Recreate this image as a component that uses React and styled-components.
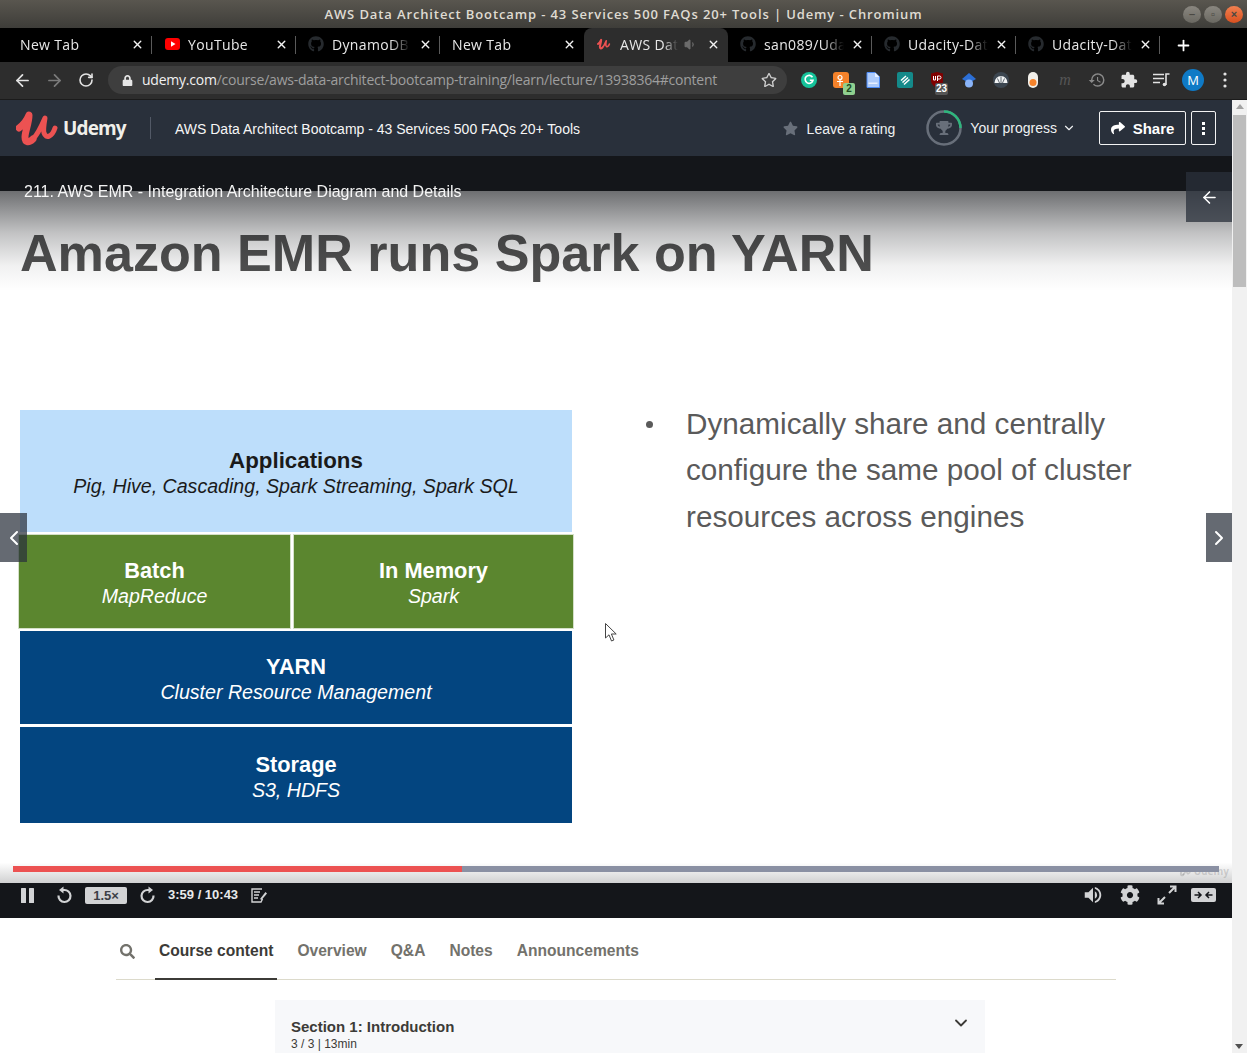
import React from "react";
import styled, { createGlobalStyle } from "styled-components";
import { FaGithub, FaLock, FaShare, FaStar, FaSearch, FaCog, FaTrophy, FaRegStar } from "react-icons/fa";
import { MdExtension, MdVolumeUp, MdHistory } from "react-icons/md";
import { ArrowLeft, ArrowRight, RotateCw, ChevronDown, ChevronLeft, ChevronRight, X, Plus, Volume1 } from "lucide-react";

const Global = createGlobalStyle`
  html, body { margin: 0; padding: 0; background: #fff; }
  body { font-family: "Liberation Sans", Arial, sans-serif; overflow: hidden; }
  * { box-sizing: border-box; }
`;

const Page = styled.div`width: 1247px; height: 1053px; overflow: hidden; display: flex; flex-direction: column;`;

const TitleBar = styled.div`
  height: 28px; flex: none; position: relative; display: flex; align-items: center; justify-content: center;
  background: linear-gradient(#59564f, #3e3d39);
  color: #dfdbd2; font: 600 13px/28px "Open Sans", sans-serif; letter-spacing: 0.88px;
`;
const WindowButtons = styled.div`position: absolute; right: 4px; top: 6px; display: flex; gap: 3px;`;
const WindowButton = styled.span`
  width: 18px; height: 17px; border-radius: 50%; display: flex; align-items: center; justify-content: center;
  background: ${p => (p.$close ? "linear-gradient(#f08050,#d9501f)" : "linear-gradient(#8a8780,#6a6861)")};
  color: #4a4843; font: 700 11px/1 "Liberation Sans", sans-serif; letter-spacing: 0;
`;

const TabStrip = styled.div`height: 34px; flex: none; background: #000; display: flex; padding-left: 8px; align-items: stretch;`;
const Tab = styled.div`
  width: 144px; display: flex; align-items: center; padding: 0 0 2px 12px; position: relative; color: #e8e8e8;
  font: 400 14px "Open Sans", sans-serif; letter-spacing: 0.35px;
  background: ${p => (p.$active ? "#2d2d2d" : "transparent")};
  border-radius: ${p => (p.$active ? "8px 8px 0 0" : "0")};
  &::after {
    content: ""; position: absolute; right: 0; top: 8px; bottom: 8px; width: 1px;
    background: ${p => (p.$sep ? "#5a5a5a" : "transparent")};
  }
`;
const TabIcon = styled.span`width: 16px; height: 16px; margin-right: 8px; flex: none; display: flex; align-items: center; justify-content: center; color: #262a2e;`;
const TabName = styled.span`
  width: ${p => p.$w}px; flex: none; white-space: nowrap; overflow: hidden;
  -webkit-mask-image: linear-gradient(90deg, #000 75%, transparent);
`;
const TabClose = styled.span`position: absolute; left: 123px; top: 10px; width: 14px; height: 14px; color: #f2f2f2; display: flex;`;
const Speaker = styled.span`position: absolute; left: 100px; top: 10px; color: #6c6c6c; display: flex;`;
const NewTab = styled.span`width: 46px; display: flex; align-items: center; justify-content: center; color: #fff;`;

const Toolbar = styled.div`height: 38px; flex: none; background: #2d2d2d; border-bottom: 1px solid #1b1b1b; display: flex; align-items: center; padding-left: 6px; padding-bottom: 1px;`;
const NavButton = styled.span`width: 32px; height: 32px; flex: none; display: flex; align-items: center; justify-content: center; color: ${p => p.$dim ? "#7b7b7b" : "#e3e3e3"};`;
const Omnibox = styled.div`
  width: 679px; height: 28px; margin: 0 6px 0 6px; border-radius: 14px; background: #3e3e3e; flex: none;
  display: flex; align-items: center; padding: 0 0 2px 14px; color: #9e9e9e; font: 400 14px "Open Sans", sans-serif; letter-spacing: -0.23px;
`;
const LockWrap = styled.span`width: 20px; flex: none; display: flex; color: #e6e6e6; margin-top: 2px;`;
const Url = styled.span`flex: 1; white-space: nowrap; b { font-weight: 400; color: #f1f1f1; }`;
const BookmarkStar = styled.span`width: 36px; display: flex; justify-content: center; color: #cfcfcf; margin-top: 2px;`;
const ExtSlot = styled.span`width: 32px; height: 32px; flex: none; position: relative; display: flex; align-items: center; justify-content: center;`;
const ExtBadge = styled.span`
  position: absolute; left: ${p => p.$l}px; top: 19px; height: 12px; min-width: 12px; padding: 0 1px; border-radius: 2px;
  background: ${p => p.$bg}; color: ${p => p.$fg}; font: 700 10px/12px "Liberation Sans", sans-serif; text-align: center;
`;
const Avatar = styled.span`width: 22px; height: 22px; border-radius: 50%; background: #0f7ac6; color: #fff; font: 400 13px/22px "Open Sans", sans-serif; text-align: center;`;

const Body = styled.div`flex: 1; min-height: 0; display: flex;`;
const Main = styled.div`width: 1232px; flex: none; display: flex; flex-direction: column; overflow: hidden;`;
const Scrollbar = styled.div`width: 15px; flex: none; background: #f1f1f1; display: flex; flex-direction: column; align-items: center; padding: 4px 1px 0; position: relative;`;
const ScrollUp = styled.span`width: 0; height: 0; border: 4px solid transparent; border-top: 0; border-bottom: 5px solid #a3a3a3; flex: none;`;
const ScrollThumb = styled.span`width: 13px; height: 172px; margin-top: 6px; background: #bdbdbd; flex: none;`;
const ScrollDown = styled.span`position: absolute; bottom: 4px; left: 3px; width: 0; height: 0; border: 4px solid transparent; border-bottom: 0; border-top: 5px solid #505050;`;

const Header = styled.header`height: 56px; flex: none; background: #29303b; color: #fff; display: flex; align-items: center; padding: 0 16px;`;
const LogoMark = styled.svg`width: 44px; height: 36px; flex: none; margin-right: 3px;`;
const LogoWord = styled.span`font: 700 19px "Open Sans", sans-serif; color: #f0efea; letter-spacing: -0.85px; width: 87px; flex: none;`;
const HeaderDivider = styled.span`width: 1px; height: 22px; background: #525966; margin-right: 24px; flex: none;`;
const CourseTitle = styled.span`font-size: 14px; color: #f6f6f6; margin-top: 2px;`;
const HeaderRight = styled.div`margin-left: auto; display: flex; align-items: center;`;
const RatingLink = styled.span`display: flex; align-items: center; font-size: 14px; gap: 9px; margin-right: 31px; color: #eef0f2; svg { color: #686f7a; margin-top: -2px; } margin-top: 2px;`;
const Ring = styled.span`width: 36px; height: 36px; position: relative; display: flex; align-items: center; justify-content: center; color: #686f7a; margin-right: 8px;`;
const RingSvg = styled.svg`position: absolute; inset: 0;`;
const ProgressLabel = styled.span`display: flex; align-items: center; font-size: 14px; gap: 5px; margin-right: 23px; margin-top: -1px; color: #eef0f2;`;
const OutlineButton = styled.span`
  height: 34px; border: 1px solid #f3f3f3; border-radius: 2px; display: flex; align-items: center; justify-content: center;
  width: ${p => p.$w}px; margin-left: ${p => p.$ml || 0}px; font-weight: 700; font-size: 15px; gap: 8px; color: #fff;
`;
const Dots = styled.span`display: flex; flex-direction: column; gap: 2px; i { display: block; width: 3px; height: 3px; background: #fff; }`;

const Video = styled.section`position: relative; flex: none; height: 762px; background: #14161a; display: flex; flex-direction: column;`;
const TopBand = styled.div`height: 35px; flex: none;`;
const Slide = styled.div`
  height: 692px; flex: none; background: #fff; position: relative; overflow: hidden; padding: 32px 0 0 20px;
  &::before {
    content: ""; position: absolute; left: 0; right: 0; top: 0; height: 100px;
    background: linear-gradient(rgba(20,22,26,.62), rgba(20,22,26,.26) 42%, rgba(20,22,26,.06) 75%, rgba(20,22,26,0));
  }
  &::after {
    content: ""; position: absolute; left: 0; right: 0; bottom: 0; height: 34px;
    background: linear-gradient(rgba(20,22,26,0) 40%, rgba(20,22,26,.2));
  }
`;
const SlideHeading = styled.h1`margin: 0; font: 700 52.1px/60px "Liberation Sans", sans-serif; color: #505050; letter-spacing: 0; white-space: nowrap;`;
const SlideColumns = styled.div`display: flex; margin-top: 127px;`;
const Diagram = styled.div`width: 552px; flex: none; display: grid; grid-template-columns: 270px 1fr; grid-template-rows: 122px 93px 93px 96px; gap: 3px;`;
const Block = styled.div`
  grid-column: ${p => (p.$half ? "auto" : "1 / -1")};
  background: ${p => p.$bg}; color: ${p => p.$fg};
  display: flex; flex-direction: column; align-items: center; justify-content: center; text-align: center; padding-top: 2px;
  margin: ${p => p.$inset || 0};
  border: ${p => (p.$half ? "1px solid #d4e0c8" : "0")};
`;
const BlockTitle = styled.div`font: 700 ${p => p.$size || 21.8}px/27px "Liberation Sans", sans-serif;`;
const BlockSub = styled.div`font: italic 400 19.6px/24px "Liberation Sans", sans-serif; white-space: nowrap;`;
const BulletList = styled.ul`margin: -9.5px 0 0; padding: 0 0 0 114px; list-style: none; width: 600px;`;
const Bullet = styled.li`position: relative; font: 400 29.7px/46.5px "Liberation Sans", sans-serif; color: #5a5a5a;
  &::before { content: ""; position: absolute; left: -40px; top: 20px; width: 7px; height: 7px; border-radius: 50%; background: #5a5a5a; }
`;
const LectureTitle = styled.div`position: absolute; left: 24px; top: 25px; color: #fff; font-size: 16px; line-height: 22px; z-index: 3; opacity: .94;`;
const SidebarToggle = styled.span`position: absolute; right: 0; top: 16px; width: 46px; height: 50px; background: rgba(41,48,59,.75); color: #fff; display: flex; align-items: center; justify-content: center; z-index: 3;`;
const Pager = styled.span`
  position: absolute; top: 357px; height: 49px; width: ${p => p.$w}px; ${p => p.$side}: 0;
  background: rgba(41,48,59,.72); color: #fff; display: flex; align-items: center; justify-content: center; z-index: 3;
`;
const Cursor = styled.svg`position: absolute; left: 605px; top: 467px; z-index: 4;`;
const Watermark = styled.span`position: absolute; right: 3px; bottom: 5px; display: flex; align-items: center; gap: 2px; color: rgba(120,120,120,.28); font: 700 10px "Open Sans", sans-serif; z-index: 2;`;
const ProgressTrack = styled.div`position: absolute; left: 13px; top: 710px; width: 1206px; height: 6px; background: #8a90a3; z-index: 3;`;
const ProgressFill = styled.div`height: 100%; background: #ec5252;`;

const Controls = styled.div`height: 35px; flex: none; background: #14161a; display: flex; align-items: flex-start; color: #d2d3d5; padding: 3px 10px 0 0; position: relative; z-index: 3;`;
const CtlGroup = styled.div`display: flex; align-items: center; height: 18px;`;
const CtlIcon = styled.span`display: flex; align-items: center; justify-content: center; width: ${p => p.$w || 37}px; flex: none; margin-left: ${p => p.$ml || 0}px;`;
const Speed = styled.span`width: 42px; height: 17px; margin-left: 3px; border-radius: 2px; background: #d2d3d5; color: #3c3f46; font: 700 13px/17px "Liberation Sans", sans-serif; text-align: center; flex: none;`;
const Time = styled.span`font: 700 13px "Liberation Sans", sans-serif; color: #e8e9ea; margin: -1px 0 0 0; width: 79px; white-space: nowrap;`;
const CtlRight = styled(CtlGroup)`margin-left: auto;`;

const Tabs = styled.nav`margin: 0 116px; height: 62px; flex: none; display: flex; align-items: stretch; border-bottom: 1px solid #dcdacb; color: #6a6f73;`;
const TabSearch = styled.span`width: 39px; padding: 6px 0 0 4px; display: flex; align-items: center; color: #73726c;`;
const TabLink = styled.span`
  padding: 6px 4px 0; margin-right: 16px; display: flex; align-items: center; font: 700 15.6px "Liberation Sans", sans-serif;
  color: ${p => (p.$active ? "#3c3b37" : "#73726c")}; margin-bottom: -1px;
  border-bottom: 2px solid ${p => (p.$active ? "#3c3b37" : "transparent")};
`;
const SectionCard = styled.div`margin: 20px 0 0 275px; width: 710px; height: 80px; flex: none; background: #f7f8fa; padding: 18px 16px; position: relative; color: #3c3b37;`;
const SectionTitle = styled.div`font: 700 15px/18px "Liberation Sans", sans-serif;`;
const SectionMeta = styled.div`font: 400 12px/16px "Liberation Sans", sans-serif;`;
const SectionChevron = styled.span`position: absolute; right: 14px; top: 13px; display: flex;`;

const LOGO_LEFT = "M3 18C7 15 11 10 13 5 13 13 9 22 9 27 9 33 13 33 17 29";
const LOGO_RIGHT = "M17 29C22 24 26 15 29 8 28 14 27 19 28 23 30 29 36 27 39 18";

const LogoStrokes = ({ color, wide, thin }) => (
  <>
    <path d={LOGO_LEFT} fill="none" stroke={color} strokeWidth={wide} strokeLinecap="round" strokeLinejoin="round" />
    <path d={LOGO_RIGHT} fill="none" stroke={color} strokeWidth={thin} strokeLinecap="round" strokeLinejoin="round" />
  </>
);

const Youtube = () => (
  <svg width="15" height="12" viewBox="0 0 15 12"><rect width="15" height="12" rx="3" fill="#f00" /><path d="M6 3.2v5.6L10.5 6z" fill="#fff" /></svg>
);
const UdemySmall = () => (
  <svg width="14" height="14" viewBox="0 0 44 36"><LogoStrokes color="#ec5252" wide={6.5} thin={5} /></svg>
);

const Grammarly = () => (
  <svg width="16" height="16" viewBox="0 0 16 16"><circle cx="8" cy="8" r="8" fill="#15c39a" /><path d="M11.500 5.200A4 4 0 1 0 12 8.300H8.800" fill="none" stroke="#fff" strokeWidth="1.600" /></svg>
);
const OrangeExt = () => (
  <svg width="16" height="16" viewBox="0 0 16 16"><rect width="16" height="16" rx="3" fill="#f5822a" /><circle cx="7" cy="5.500" r="2" fill="none" stroke="#fff" strokeWidth="1.200" /><path d="M7 7.500V14M4 9.500h6" stroke="#fff" strokeWidth="1.200" /></svg>
);
const DocExt = () => (
  <svg width="14" height="16" viewBox="0 0 14 16"><path d="M1 .5h8l4.500 4.500V15.500H1z" fill="#aecbfa" stroke="#4c8bf5" /><path d="M9 .5V5h4.500z" fill="#e8f0fe" /><rect x="2.500" y="10.500" width="9" height="1.500" fill="#e8f0fe" /></svg>
);
const TealExt = () => (
  <svg width="16" height="16" viewBox="0 0 16 16"><rect width="16" height="16" rx="2" fill="#148a8a" /><path d="M4 8.500 9 4M5.500 10.500 11 5.500M7 12.500 12.500 7.500" stroke="#fff" strokeWidth="1.500" /></svg>
);
const UBlock = () => (
  <svg width="14" height="16" viewBox="0 0 14 16"><path d="M1 1.500 7 0l6 1.500v7C13 12 10 14.500 7 16 4 14.500 1 12 1 8.500z" fill="#800000" /><path d="M3.500 4v4h2V4M7.500 9V4h2a1.300 1.300 0 0 1 0 3h-2" fill="none" stroke="#fff" strokeWidth="1" /></svg>
);
const CapExt = () => (
  <svg width="16" height="17" viewBox="0 0 16 17"><path d="M8 1 15 7 8 11 1 7z" fill="#2c6fd6" /><circle cx="8" cy="11.500" r="4" fill="#8ab4f8" /></svg>
);
const CloudExt = () => (
  <svg width="16" height="16" viewBox="0 0 16 16"><circle cx="8" cy="8" r="8" fill="#3c4650" /><path d="M1.500 11a6.500 7 0 0 1 13 0z" fill="#f1f3f4" /><path d="M8 4.500V11M4.500 6.500l2 4.500M11.500 6.500 9.500 11" stroke="#3c4650" strokeWidth=".8" /></svg>
);
const PillExt = () => (
  <svg width="10" height="16" viewBox="0 0 10 16"><rect width="10" height="16" rx="5" fill="#f1efe9" /><circle cx="5" cy="10.500" r="3.500" fill="#f5822a" /></svg>
);
const MExt = styled.span`font: italic 400 16px "Liberation Serif", serif; color: #555;`;
const QueueMusic = () => (
  <svg width="17" height="14" viewBox="0 0 17 14" fill="none" stroke="#e3e3e3" strokeWidth="1.600"><path d="M0 1.500h11M0 5.500h11M0 9.500h7M13 12V1h3.500" /><circle cx="11.500" cy="11.500" r="1.800" fill="#e3e3e3" stroke="none" /></svg>
);
const VDots = () => (
  <svg width="4" height="16" viewBox="0 0 4 16" fill="#e3e3e3"><circle cx="2" cy="2" r="1.600" /><circle cx="2" cy="8" r="1.600" /><circle cx="2" cy="14" r="1.600" /></svg>
);
const PauseIcon = () => (
  <svg width="13" height="15" viewBox="0 0 13 15" fill="#d2d3d5"><rect width="5" height="15" rx=".5" /><rect x="8" width="5" height="15" rx=".5" /></svg>
);
const ForwardIcon = () => (
  <svg width="16" height="18" viewBox="0 0 16 18" fill="none" stroke="#d2d3d5" strokeWidth="2.200"><path d="M13.500 9.500A6 6 0 1 1 8 4h2" /><path d="M8.500 .5 13 4 8.500 7.500z" fill="#d2d3d5" stroke="none" /></svg>
);
const ReplayIcon = () => (
  <svg width="16" height="18" viewBox="0 0 16 18" fill="none" stroke="#d2d3d5" strokeWidth="2.200"><path d="M2.500 9.500A6 6 0 1 0 8 4H6" /><path d="M7.500 .5 3 4l4.500 3.500z" fill="#d2d3d5" stroke="none" /></svg>
);
const NotesIcon = () => (
  <svg width="16" height="15" viewBox="0 0 16 15" fill="none" stroke="#d2d3d5" strokeWidth="1.400"><path d="M11 1H1v13h9l1.500-3" /><path d="M3 4h6M3 7h5M3 10h4" /><path d="M9 11l5.500-7L16 5.500 10.500 12z" fill="#d2d3d5" stroke="none" /></svg>
);
const ExpandIcon = () => (
  <svg width="20" height="20" viewBox="0 0 20 20" fill="none" stroke="#d2d3d5" strokeWidth="2"><path d="M12 8 18 2M13 1.500h5.500V7M8 12 2 18M1.500 13v5.500H7" /></svg>
);
const TheaterIcon = () => (
  <svg width="25" height="14" viewBox="0 0 25 14"><rect width="25" height="14" rx="2" fill="#d2d3d5" /><path d="M3.500 7h6M7 4l3 3-3 3M21.500 7h-6M18 4l-3 3 3 3" fill="none" stroke="#14161a" strokeWidth="1.500" /></svg>
);

const tabs = [
  { name: "New Tab", w: 100, sep: true },
  { name: "YouTube", w: 76, sep: true, icon: <Youtube /> },
  { name: "DynamoDB", w: 78, sep: true, icon: <FaGithub size={16} /> },
  { name: "New Tab", w: 100 },
  { name: "AWS Data Architect", w: 58, active: true, icon: <UdemySmall />, sound: true },
  { name: "san089/Udacity", w: 80, sep: true, icon: <FaGithub size={16} /> },
  { name: "Udacity-Data", w: 80, sep: true, icon: <FaGithub size={16} /> },
  { name: "Udacity-Data", w: 80, sep: true, icon: <FaGithub size={16} /> },
];

export default function App() {
  return (
    <Page>
      <Global />
      <TitleBar>
        AWS Data Architect Bootcamp - 43 Services 500 FAQs 20+ Tools | Udemy - Chromium
        <WindowButtons>
          <WindowButton>–</WindowButton>
          <WindowButton>▫</WindowButton>
          <WindowButton $close>×</WindowButton>
        </WindowButtons>
      </TitleBar>
      <TabStrip>
        {tabs.map((t, i) => (
          <Tab key={i} $active={t.active} $sep={t.sep}>
            {t.icon && <TabIcon>{t.icon}</TabIcon>}
            <TabName $w={t.w}>{t.name}</TabName>
            {t.sound && <Speaker><Volume1 size={13} fill="currentColor" /></Speaker>}
            <TabClose><X size={13} strokeWidth={2.6} /></TabClose>
          </Tab>
        ))}
        <NewTab><Plus size={17} strokeWidth={2.5} /></NewTab>
      </TabStrip>
      <Toolbar>
        <NavButton><ArrowLeft size={19} strokeWidth={2.2} /></NavButton>
        <NavButton $dim><ArrowRight size={19} strokeWidth={2.2} /></NavButton>
        <NavButton><RotateCw size={16} strokeWidth={2.4} /></NavButton>
        <Omnibox>
          <LockWrap><FaLock size={11} /></LockWrap>
          <Url><b>udemy.com</b>/course/aws-data-architect-bootcamp-training/learn/lecture/13938364#content</Url>
          <BookmarkStar><FaRegStar size={16} /></BookmarkStar>
        </Omnibox>
        <ExtSlot><Grammarly /></ExtSlot>
        <ExtSlot><OrangeExt /><ExtBadge $l={18} $bg="#8fd08f" $fg="#1d4a1d">2</ExtBadge></ExtSlot>
        <ExtSlot><DocExt /></ExtSlot>
        <ExtSlot><TealExt /></ExtSlot>
        <ExtSlot><UBlock /><ExtBadge $l={14} $bg="#555" $fg="#fff">23</ExtBadge></ExtSlot>
        <ExtSlot><CapExt /></ExtSlot>
        <ExtSlot><CloudExt /></ExtSlot>
        <ExtSlot><PillExt /></ExtSlot>
        <ExtSlot><MExt>m</MExt></ExtSlot>
        <ExtSlot><MdHistory size={18} color="#8a8a8a" /></ExtSlot>
        <ExtSlot><MdExtension size={18} color="#e3e3e3" /></ExtSlot>
        <ExtSlot><QueueMusic /></ExtSlot>
        <ExtSlot><Avatar>M</Avatar></ExtSlot>
        <ExtSlot><VDots /></ExtSlot>
      </Toolbar>
      <Body>
        <Main>
          <Header>
            <LogoMark viewBox="0 0 44 36"><LogoStrokes color="#ec5252" wide={7} thin={5} /></LogoMark>
            <LogoWord>Udemy</LogoWord>
            <HeaderDivider />
            <CourseTitle>AWS Data Architect Bootcamp - 43 Services 500 FAQs 20+ Tools</CourseTitle>
            <HeaderRight>
              <RatingLink><FaStar size={15} />Leave a rating</RatingLink>
              <Ring>
                <RingSvg viewBox="0 0 36 36">
                  <circle cx="18" cy="18" r="16.500" fill="none" stroke="#686f7a" strokeWidth="2.500" />
                  <path d="M18 1.500A16.500 16.500 0 0 1 34.500 18" fill="none" stroke="#2eb67d" strokeWidth="2.500" />
                </RingSvg>
                <FaTrophy size={16} />
              </Ring>
              <ProgressLabel>Your progress <ChevronDown size={14} /></ProgressLabel>
              <OutlineButton $w={87}><FaShare size={14} />Share</OutlineButton>
              <OutlineButton $w={25} $ml={5}><Dots><i /><i /><i /></Dots></OutlineButton>
            </HeaderRight>
          </Header>
          <Video>
            <TopBand />
            <Slide>
              <SlideHeading>Amazon EMR runs Spark on YARN</SlideHeading>
              <SlideColumns>
                <Diagram>
                  <Block $bg="#bddefb" $fg="#1a1a1a">
                    <BlockTitle $size={22.3}>Applications</BlockTitle>
                    <BlockSub>Pig, Hive, Cascading, Spark Streaming, Spark SQL</BlockSub>
                  </Block>
                  <Block $half $inset="-1px -1px -1px -2px" $bg="#5b862f" $fg="#fff">
                    <BlockTitle>Batch</BlockTitle>
                    <BlockSub>MapReduce</BlockSub>
                  </Block>
                  <Block $half $inset="-1px -2px -1px 0" $bg="#5b862f" $fg="#fff">
                    <BlockTitle>In Memory</BlockTitle>
                    <BlockSub>Spark</BlockSub>
                  </Block>
                  <Block $bg="#034580" $fg="#fff">
                    <BlockTitle>YARN</BlockTitle>
                    <BlockSub>Cluster Resource Management</BlockSub>
                  </Block>
                  <Block $bg="#034580" $fg="#fff">
                    <BlockTitle>Storage</BlockTitle>
                    <BlockSub>S3, HDFS</BlockSub>
                  </Block>
                </Diagram>
                <BulletList>
                  <Bullet>Dynamically share and centrally configure the same pool of cluster resources across engines</Bullet>
                </BulletList>
              </SlideColumns>
              <Watermark>
                <svg width="14" height="12" viewBox="0 0 44 36"><LogoStrokes color="currentColor" wide={6} thin={5} /></svg>
                Udemy
              </Watermark>
            </Slide>
            <LectureTitle>211. AWS EMR - Integration Architecture Diagram and Details</LectureTitle>
            <SidebarToggle><ArrowLeft size={19} /></SidebarToggle>
            <Pager $side="left" $w={27}><ChevronLeft size={24} /></Pager>
            <Pager $side="right" $w={26}><ChevronRight size={24} /></Pager>
            <Cursor width="13" height="19" viewBox="0 0 13 19"><path d="M.5.500V15L4 11.800 6.500 18l2.400-1-2.500-6h4.800z" fill="#fff" stroke="#444" strokeWidth="1" /></Cursor>
            <ProgressTrack><ProgressFill style={{ width: "37.2%" }} /></ProgressTrack>
            <Controls>
              <CtlGroup>
                <CtlIcon $w={20} $ml={17}><PauseIcon /></CtlIcon>
                <CtlIcon $w={37} $ml={8}><ReplayIcon /></CtlIcon>
                <Speed>1.5×</Speed>
                <CtlIcon $w={41}><ForwardIcon /></CtlIcon>
                <Time>3:59 / 10:43</Time>
                <CtlIcon $w={24}><NotesIcon /></CtlIcon>
              </CtlGroup>
              <CtlRight>
                <CtlIcon><MdVolumeUp size={22} /></CtlIcon>
                <CtlIcon><FaCog size={20} /></CtlIcon>
                <CtlIcon><ExpandIcon /></CtlIcon>
                <CtlIcon><TheaterIcon /></CtlIcon>
              </CtlRight>
            </Controls>
          </Video>
          <Tabs>
            <TabSearch><FaSearch size={15} /></TabSearch>
            <TabLink $active>Course content</TabLink>
            <TabLink>Overview</TabLink>
            <TabLink>Q&amp;A</TabLink>
            <TabLink>Notes</TabLink>
            <TabLink>Announcements</TabLink>
          </Tabs>
          <SectionCard>
            <SectionTitle>Section 1: Introduction</SectionTitle>
            <SectionMeta>3 / 3 | 13min</SectionMeta>
            <SectionChevron><ChevronDown size={20} strokeWidth={2.2} /></SectionChevron>
          </SectionCard>
        </Main>
        <Scrollbar>
          <ScrollUp />
          <ScrollThumb />
          <ScrollDown />
        </Scrollbar>
      </Body>
    </Page>
  );
}
